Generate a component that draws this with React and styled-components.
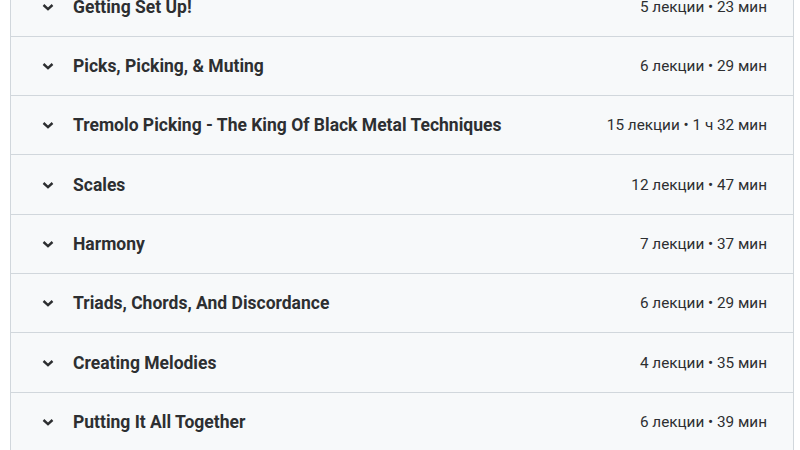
import React from 'react'
import styled, { createGlobalStyle } from 'styled-components'

const GlobalStyle = createGlobalStyle`
  html, body {
    margin: 0;
    padding: 0;
    background: #ffffff;
    font-family: Roboto, "Noto Sans", sans-serif;
    overflow: hidden;
  }
`

const Curriculum = styled.div`
  margin: -22.6px 0 0 10px;
  width: 784px;
  box-sizing: border-box;
  border-left: 1px solid #d1d7dc;
  border-right: 1px solid #d1d7dc;
`

const Section = styled.div`
  display: flex;
  align-items: center;
  height: 59.33px;
  box-sizing: border-box;
  padding: 0 26px 0 29px;
  background: #f7f9fa;
  border-bottom: 1px solid #d1d7dc;
`

const Chevron = styled.svg`
  width: 16px;
  height: 16px;
  flex-shrink: 0;
  fill: none;
  stroke: #2d2f31;
  stroke-width: 2.4px;
  margin-right: 17px;
`

const Title = styled.span`
  flex: 1;
  font-size: 17.5px;
  font-weight: 700;
  color: #2d2f31;
`

const Meta = styled.span`
  font-size: 15.3px;
  color: #2d2f31;
  white-space: nowrap;
`

const sections = [
  ['Getting Set Up!', '5 лекции • 23 мин'],
  ['Picks, Picking, & Muting', '6 лекции • 29 мин'],
  ['Tremolo Picking - The King Of Black Metal Techniques', '15 лекции • 1 ч 32 мин'],
  ['Scales', '12 лекции • 47 мин'],
  ['Harmony', '7 лекции • 37 мин'],
  ['Triads, Chords, And Discordance', '6 лекции • 29 мин'],
  ['Creating Melodies', '4 лекции • 35 мин'],
  ['Putting It All Together', '6 лекции • 39 мин'],
]

export default function App() {
  return (
    <>
      <GlobalStyle />
      <Curriculum>
        {sections.map(([title, meta]) => (
          <Section key={title}>
            <Chevron viewBox="0 0 16 16">
              <polyline points="3.5 6 8 10.2 12.5 6" />
            </Chevron>
            <Title>{title}</Title>
            <Meta>{meta}</Meta>
          </Section>
        ))}
      </Curriculum>
    </>
  )
}
